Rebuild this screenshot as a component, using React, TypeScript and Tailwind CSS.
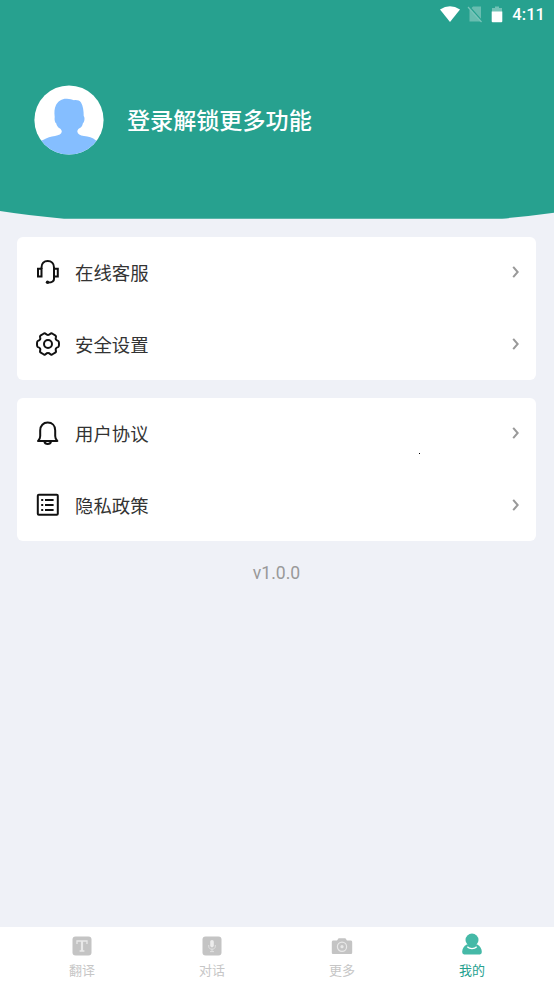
import type { ReactNode } from 'react'

const menuGroups: { label: string; icon: ReactNode }[][] = [
  [
    { label: '在线客服', icon: <HeadsetIcon /> },
    { label: '安全设置', icon: <GearIcon /> },
  ],
  [
    { label: '用户协议', icon: <BellIcon /> },
    { label: '隐私政策', icon: <ListIcon /> },
  ],
]

const tabs = [
  { label: '翻译', icon: <TranslateIcon />, active: false },
  { label: '对话', icon: <MicIcon />, active: false },
  { label: '更多', icon: <CameraIcon />, active: false },
  { label: '我的', icon: <UserIcon />, active: true },
]

function HeadsetIcon() {
  return (
    <svg className="h-6 w-6" viewBox="0 0 24 24" fill="none" stroke="#111" strokeWidth="2">
      <path d="M5.500 9V7.500C5.500 3.500 8 1 11.700 1S18 3.500 18 7.500V19c0 2.500-1.700 3.500-6 3.600" />
      <path d="M5.500 8.800H2v7.600h3.500zM18 8.800h3.800v7.600H18z" />
      <circle cx="11.500" cy="22.300" r="1.700" fill="#111" stroke="none" />
    </svg>
  )
}

function GearIcon() {
  return (
    <svg className="h-6 w-6" viewBox="0 0 24 24" fill="none" stroke="#111" strokeWidth="2" strokeLinejoin="round">
      <path d="M7.900 1.500Q9 1 9.600 1.800Q12 4.200 14.400 1.800Q15 1 16.100 1.500L19.200 3.300Q20.200 4 19.900 5.200Q19 8.100 22 8.900Q23 9.200 23 12T22 15.100Q19 15.900 19.900 18.800Q20.200 20 19.200 20.700L16.100 22.500Q15 23 14.400 22.200Q12 19.800 9.600 22.200Q9 23 7.900 22.500L4.800 20.700Q3.800 20 4.100 18.800Q5 15.900 2 15.100Q1 14.800 1 12T2 8.900Q5 8.100 4.100 5.200Q3.800 4 4.800 3.300Z" />
      <circle cx="12" cy="12" r="4" />
    </svg>
  )
}

function BellIcon() {
  return (
    <svg className="h-6 w-6" viewBox="0 0 24 24" fill="none" stroke="#111" strokeWidth="2" strokeLinejoin="round">
      <path d="M2 20c1.700-1.300 2.200-2.800 2.200-5V9.400C4.200 4.600 7.300 1.600 11.700 1.600s7.500 3 7.500 7.800V15c0 2.200.500 3.700 2.200 5z" />
      <path d="M8.400 20.500c.3 1.600 1.500 2.500 3.300 2.500s3-.9 3.300-2.500" />
    </svg>
  )
}

function ListIcon() {
  return (
    <svg className="h-6 w-6" viewBox="0 0 24 24" fill="none" stroke="#111" strokeWidth="2">
      <rect x="1.800" y="1.800" width="20" height="20" rx="1" />
      <path d="M5.200 7h2M5.200 12h2M5.200 17h2M9 7h8.600M9 12h8.600M9 17h8.600" strokeWidth="1.800" />
    </svg>
  )
}

function TranslateIcon() {
  return (
    <svg className="h-5 w-5" viewBox="0 0 20 20">
      <rect x=".5" y=".5" width="19" height="19" rx="3" fill="#c4c4c4" />
      <path d="M5 8V5h10v3M10 5v10M7.600 15h4.800" fill="none" stroke="#e9e9e9" strokeWidth="1.300" />
      <path d="M10 5v10" stroke="#e9e9e9" strokeWidth="2.200" />
    </svg>
  )
}

function MicIcon() {
  return (
    <svg className="h-5 w-5" viewBox="0 0 20 20">
      <rect x=".5" y=".5" width="19" height="19" rx="3" fill="#c4c4c4" />
      <rect x="8.200" y="4" width="3.600" height="7.400" rx="1.800" fill="#ececec" />
      <path d="M6.700 9v1.200c0 2 1.300 3 3.300 3s3.300-1 3.300-3V9M10 13v2.400M8 15.600h4" fill="none" stroke="#e4e4e4" strokeWidth=".9" />
    </svg>
  )
}

function CameraIcon() {
  return (
    <svg className="h-5 w-[22px]" viewBox="0 0 22 20">
      <path d="M2.500 4.600H6L7.600 2.200h6.800L16 4.600h3.500c1.100 0 1.700.7 1.700 1.700v10.100c0 1-.6 1.600-1.700 1.600h-17c-1.100 0-1.700-.6-1.700-1.600V6.300c0-1 .6-1.700 1.700-1.700z" fill="#c4c4c4" />
      <circle cx="11" cy="10.700" r="4.600" fill="none" stroke="#e8e8e8" strokeWidth="1.200" />
      <circle cx="11" cy="10.700" r="1.600" fill="#e8e8e8" />
    </svg>
  )
}

function UserIcon() {
  return (
    <svg className="mb-[3px] h-[23px] w-5" viewBox="0 0 20 23">
      <path d="M4.700 11.500c-2.600 1.400-4.500 4-4.500 7.200 0 2.300 1.300 2.900 3.300 2.900h13c2 0 3.300-.6 3.300-2.900 0-3.200-1.900-5.800-4.500-7.200z" fill="#45b9a7" />
      <circle cx="10" cy="7" r="6.500" fill="#45b9a7" />
      <path d="M5.300 13.700c1.200 1.300 2.900 1.900 4.700 1.900s3.500-.6 4.700-1.900" fill="none" stroke="#fff" strokeWidth="1.300" />
    </svg>
  )
}

function StatusBar() {
  return (
    <div className="flex h-7 items-center justify-end pr-[9px] text-white">
      <svg className="h-4 w-5" viewBox="0 0 20 16">
        <path d="M0 3.600Q10-3.200 20 3.600L10 16z" fill="#fff" />
      </svg>
      <svg className="ml-[7px] h-[18px] w-4" viewBox="0 0 16 18">
        <path d="M6 1.500h8v12.300L4.500 3zM2.500 4.500V16.500h10.800z" fill="#fff" opacity=".3" />
        <path d="M1 2l13.500 15" stroke="#fff" strokeWidth="1.200" opacity=".38" />
      </svg>
      <svg className="ml-[8px] h-[17px] w-3" viewBox="0 0 12 17">
        <path d="M1 2h3V.5h4V2h3v4H1z" fill="#fff" opacity=".35" />
        <path d="M.7 5.500h10.600v9.800q0 1-1 1H1.700q-1 0-1-1z" fill="#fff" />
      </svg>
      <span className="mt-px ml-[9px] text-[16.6px] leading-7 font-medium">4:11</span>
    </div>
  )
}

function Header() {
  return (
    <header>
      <div className="h-[211px] bg-[#27a18f]">
        <StatusBar />
        <div className="flex items-center pt-[57px] pl-[34px]">
          <svg className="h-[70px] w-[70px]" viewBox="0 0 70 70">
            <defs>
              <clipPath id="avatar">
                <circle cx="35" cy="35" r="34.600" />
              </clipPath>
            </defs>
            <g clipPath="url(#avatar)">
              <rect width="70" height="70" fill="#fff" />
              <path d="M0 70V58C4 56.500 6 56 9 55C13 52.500 17 51.500 21 51C25 50.300 27.500 49 27.800 46.500C27.500 44.500 26.500 43.500 25 43C23.500 41.500 22.500 40 22.300 38.500C20.800 37.500 20.300 34.500 20.700 32C20.200 27 20.300 23.500 22 20C24 16 28 13.700 32 13.700C35 13.500 38 14.300 40 15.200C43 14.800 45.500 15.500 47 17.500C49 20.500 49.800 26 49.700 31C51 32.500 50.800 36.500 48.800 38.500C48.500 40.500 47.500 42 46 43C44.500 43.500 43.500 44.500 43.300 46.500C43.600 49 46 50.500 50 51C54.500 51.500 58.500 52.500 62 55.500L70 58V70z" fill="#85beff" />
            </g>
          </svg>
          <h1 className="mt-[3px] ml-[23px] text-[23.1px] leading-8 font-medium text-white">登录解锁更多功能</h1>
        </div>
      </div>
      <svg className="block h-2 w-full" viewBox="0 0 554 8" preserveAspectRatio="none">
        <path d="M0 0H554V1.700Q530 5 502 7.700H64Q30 4.700 0 0z" fill="#27a18f" />
      </svg>
    </header>
  )
}

function MenuRow({ label, icon }: { label: string; icon: ReactNode }) {
  return (
    <li className="flex h-[71.75px] items-center pr-[17px] pl-[19px]">
      {icon}
      <span className="mt-[3px] ml-[15px] flex-1 text-[18.4px] leading-7 text-[#333]">{label}</span>
      <svg className="h-3 w-2" viewBox="0 0 8 12" fill="none" stroke="#999" strokeWidth="2">
        <path d="M2.200.800 6.700 6 2.200 11.200" />
      </svg>
    </li>
  )
}

export default function App() {
  return (
    <div className="flex h-[986px] w-[554px] flex-col overflow-hidden bg-[#eff1f7] font-[Roboto,'Noto_Sans_CJK_SC',sans-serif]">
      <Header />

      <main className="relative flex-1 pt-[17.5px] pr-[18px] pl-[17px]">
        {menuGroups.map((group, index) => (
          <ul key={index} className="mb-[17.5px] rounded-md bg-white">
            {group.map((item) => (
              <MenuRow key={item.label} {...item} />
            ))}
          </ul>
        ))}
        <p className="text-center text-[17.6px] leading-7 text-[#999]">v1.0.0</p>
        <span className="absolute top-[234px] left-[419px] h-px w-px bg-black" />
      </main>

      <nav className="flex h-[59px] bg-white px-[17px]">
        {tabs.map((tab) => (
          <div key={tab.label} className="flex flex-1 flex-col items-center pt-[7px]">
            <div className="flex h-6 items-center">{tab.icon}</div>
            <span className={`mt-[3px] text-[13px] leading-5 ${tab.active ? 'text-[#27a18f]' : 'text-[#c6c6c6]'}`}>
              {tab.label}
            </span>
          </div>
        ))}
      </nav>
    </div>
  )
}
